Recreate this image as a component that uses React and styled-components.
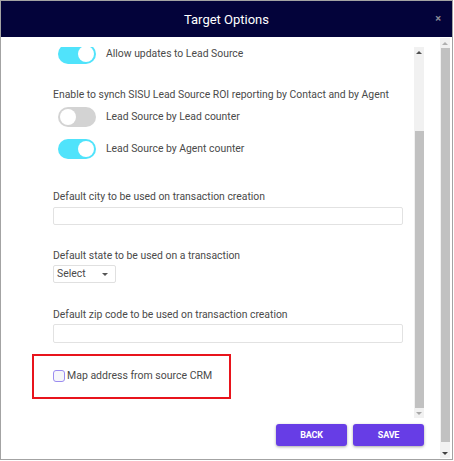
import styled, { createGlobalStyle } from "styled-components";

const GlobalStyle = createGlobalStyle`
  body {
    margin: 0;
    font-family: Roboto, "Liberation Sans", sans-serif;
    background: #ffffff;
  }
`;

const Frame = styled.div`
  width: 453px;
  height: 460px;
  box-sizing: border-box;
  border: 1px solid #a3a3a3;
  display: flex;
  flex-direction: column;
  background: #ffffff;
  overflow: hidden;
`;

const Header = styled.div`
  position: relative;
  height: 36px;
  flex-shrink: 0;
  background: #03033a;
  display: flex;
  align-items: center;
  justify-content: center;
`;

const Title = styled.h1`
  margin: 0;
  font-size: 13px;
  font-weight: 400;
  color: #ffffff;
`;

const Close = styled.span`
  position: absolute;
  right: 11px;
  top: 12px;
  font-size: 11px;
  line-height: 11px;
  font-weight: 700;
  color: #8a8a96;
`;

const Body = styled.div`
  flex: 1;
  display: flex;
  min-height: 0;
`;

const Main = styled.div`
  flex: 1;
  min-width: 0;
  display: flex;
  flex-direction: column;
  padding: 10px 16px 0 0;
`;

const Panel = styled.div`
  height: 371px;
  display: flex;
  overflow: hidden;
`;

const Content = styled.div`
  flex: 1;
  min-width: 0;
  display: flex;
  flex-direction: column;
  padding: 0 11px 0 52px;
  overflow: hidden;
  color: #4a4a4a;
  font-size: 10.4px;
  line-height: 16px;
  white-space: nowrap;
`;

const Track = styled.div`
  width: 10px;
  flex-shrink: 0;
  background: #f1f1f1;
  display: flex;
  flex-direction: column;
  align-items: center;
  margin: ${(p) => p.$margin || "0"};
`;

const Arrow = styled.div`
  height: 10px;
  width: 10px;
  display: flex;
  align-items: center;
  justify-content: center;
  flex-shrink: 0;

  &::after {
    content: "";
    border-left: 3px solid transparent;
    border-right: 3px solid transparent;
    ${(p) =>
      p.$down
        ? `border-top: 3px solid ${p.$color};`
        : `border-bottom: 3px solid ${p.$color};`}
  }
`;

const Thumb = styled.div`
  width: 9px;
  background: #c1c1c1;
  margin-top: ${(p) => p.$offset}px;
  height: ${(p) => p.$size}px;
`;

const ToggleRow = styled.div`
  display: flex;
  align-items: center;
  gap: 10px;
  padding-left: 5px;
  margin-top: ${(p) => p.$top}px;
`;

const Switch = styled.span`
  position: relative;
  width: 38px;
  height: 20px;
  border-radius: 10px;
  flex-shrink: 0;
  background: ${(p) => (p.$on ? "#50e3fb" : "#d3d3d3")};

  &::after {
    content: "";
    position: absolute;
    top: 2px;
    left: ${(p) => (p.$on ? "20px" : "2px")};
    width: 16px;
    height: 16px;
    border-radius: 50%;
    background: #ffffff;
  }
`;

const Text = styled.div`
  margin-top: ${(p) => p.$top || 0}px;
`;

const Input = styled.input`
  box-sizing: border-box;
  width: 350px;
  height: ${(p) => p.$h || 18}px;
  margin: ${(p) => p.$top || 2}px 0 0;
  border: 1px solid #e2e2e2;
  border-radius: 2px;
  padding: 0 4px;
  outline: none;
`;

const Select = styled.div`
  box-sizing: border-box;
  width: 63px;
  height: 18px;
  margin-top: 1px;
  border: 1px solid #e0e0e0;
  border-radius: 2px;
  display: flex;
  align-items: center;
  justify-content: space-between;
  padding: 0 7px 0 3px;
  color: #4a4a4a;

  &::after {
    content: "";
    border-left: 3px solid transparent;
    border-right: 3px solid transparent;
    border-top: 3px solid #555555;
  }
`;

const CheckRow = styled.label`
  position: relative;
  display: flex;
  align-items: center;
  gap: 2px;
  margin-top: 25px;
  font-size: 10.5px;
  line-height: 16px;
  color: #4a4a4a;
`;

const Check = styled.span`
  box-sizing: border-box;
  width: 12px;
  height: 12px;
  border: 1px solid #9b8cf0;
  border-radius: 3px;
  background: #f6f6fa;
`;

const Highlight = styled.span`
  position: absolute;
  left: -21px;
  top: -14px;
  width: 199px;
  height: 45px;
  box-sizing: border-box;
  border: 2px solid #e8141c;
  pointer-events: none;
`;

const Actions = styled.div`
  display: flex;
  justify-content: flex-end;
  gap: 6px;
  margin-top: 6px;
`;

const Button = styled.button`
  width: 71px;
  height: 22px;
  border: none;
  border-radius: 3px;
  background: #673de6;
  color: #ffffff;
  font-family: Roboto, "Liberation Sans", sans-serif;
  font-size: 9px;
  font-weight: 700;
  letter-spacing: -0.2px;
  box-shadow: 0 1px 3px rgba(0, 0, 0, 0.35);
  cursor: pointer;
`;

const Scrollbar = ({ thumbOffset, thumbSize, upColor, downColor, margin }) => (
  <Track $margin={margin}>
    <Arrow $color={upColor} />
    <Thumb $offset={thumbOffset} $size={thumbSize} />
    <div style={{ flex: 1 }} />
    <Arrow $down $color={downColor} />
  </Track>
);

const App = () => {
  return (
    <>
      <GlobalStyle />
      <Frame>
        <Header>
          <Title>Target Options</Title>
          <Close>×</Close>
        </Header>
        <Body>
          <Main>
            <Panel>
              <Content>
                <ToggleRow $top={-3}>
                  <Switch $on />
                  <span>Allow updates to Lead Source</span>
                </ToggleRow>
                <Text $top={23}>
                  Enable to synch SISU Lead Source ROI reporting by Contact and by Agent
                </Text>
                <ToggleRow $top={4}>
                  <Switch />
                  <span>Lead Source by Lead counter</span>
                </ToggleRow>
                <ToggleRow $top={12}>
                  <Switch $on />
                  <span>Lead Source by Agent counter</span>
                </ToggleRow>
                <Text $top={30}>Default city to be used on transaction creation</Text>
                <Input type="text" />
                <Text $top={23}>Default state to be used on a transaction</Text>
                <Select>Select</Select>
                <Text $top={24}>Default zip code to be used on transaction creation</Text>
                <Input type="text" $top={1} $h={19} />
                <CheckRow>
                  <Check />
                  Map address from source CRM
                  <Highlight />
                </CheckRow>
              </Content>
              <Scrollbar thumbOffset={74} thumbSize={278} upColor="#505050" downColor="#a8a8a8" />
            </Panel>
            <Actions>
              <Button>BACK</Button>
              <Button>SAVE</Button>
            </Actions>
          </Main>
          <Scrollbar
            thumbOffset={0}
            thumbSize={394}
            upColor="#b0b0b0"
            downColor="#404040"
            margin="1px 2px 1px 0"
          />
        </Body>
      </Frame>
    </>
  );
};

export default App;
